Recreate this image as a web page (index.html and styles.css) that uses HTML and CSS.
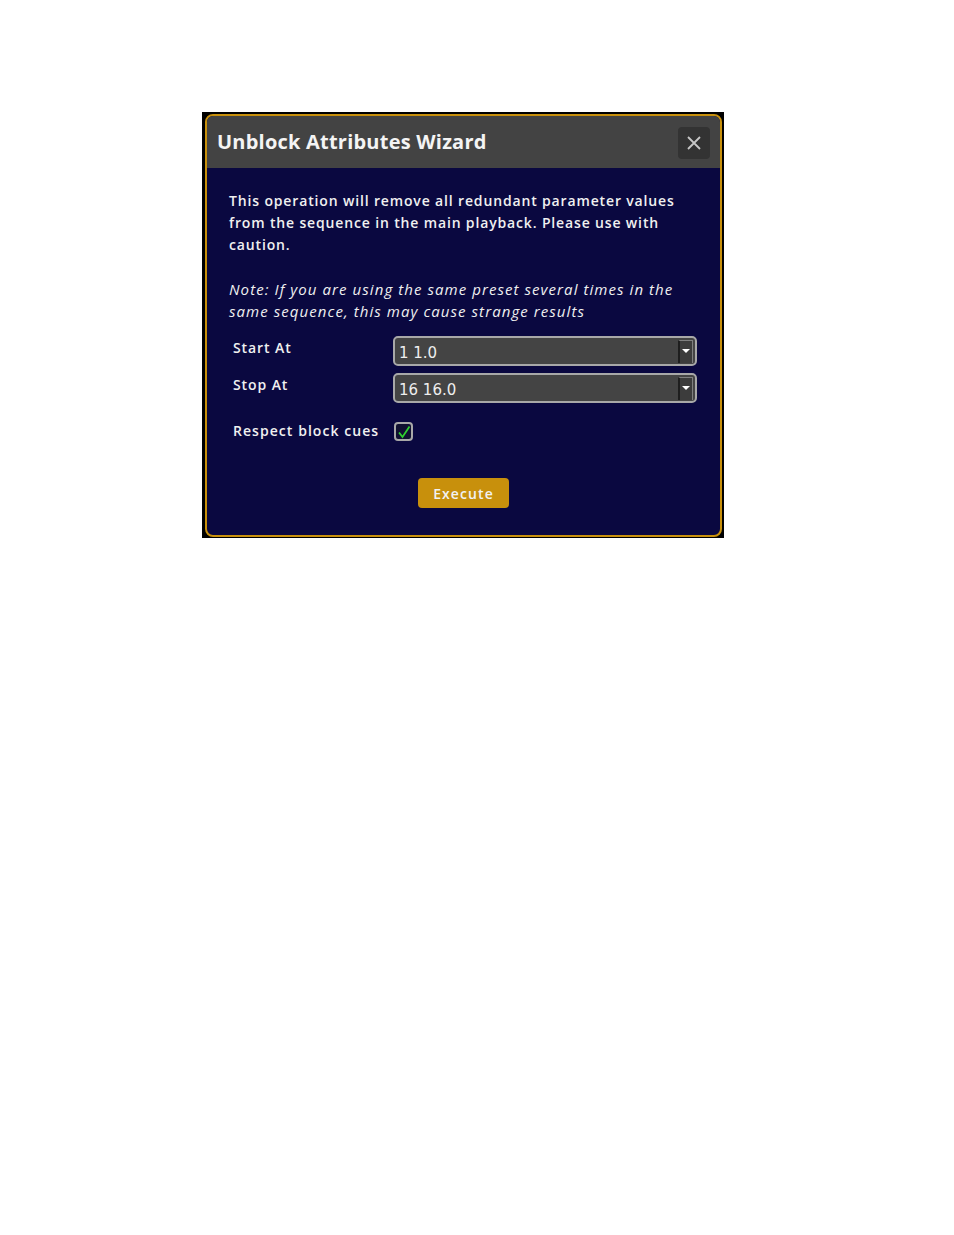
FILE: index.html
```html
<!DOCTYPE html>
<html>
<head>
<meta charset="utf-8">
<link rel="stylesheet" href="styles.css">
</head>
<body>
<div class="frame">
  <div class="dialog">
    <div class="header">
      <div class="title">Unblock Attributes Wizard</div>
      <div class="close">
        <svg width="16" height="16" viewBox="0 0 16 16"><path d="M2 2 L14 14 M14 2 L2 14" stroke="#c8c8c8" stroke-width="1.8" fill="none"/></svg>
      </div>
    </div>
    <div class="content">
      <p class="desc">This operation will remove all redundant parameter values<br>from the sequence in the main playback. Please use with<br>caution.</p>
      <p class="note">Note: If you are using the same preset several times in the<br>same sequence, this may cause strange results</p>
      <div class="row">
        <div class="label">Start At</div>
        <div class="select"><span class="val">1 1.0</span><span class="arrow"></span></div>
      </div>
      <div class="row">
        <div class="label">Stop At</div>
        <div class="select"><span class="val">16 16.0</span><span class="arrow"></span></div>
      </div>
      <div class="row check-row">
        <div class="label">Respect block cues</div>
        <div class="checkbox">
          <svg width="14" height="14" viewBox="0 0 14 14"><path d="M2 7.5 L5.5 12 L12.5 1.5" stroke="#2fcf2f" stroke-width="1.8" fill="none"/></svg>
        </div>
      </div>
      <div class="actions">
        <div class="btn">Execute</div>
      </div>
    </div>
  </div>
</div>
</body>
</html>
```
FILE: styles.css
```css
html, body {
  margin: 0;
  padding: 0;
  background: #ffffff;
}
.frame {
  margin: 112px 0 0 202px;
  width: 522px;
  height: 426px;
  background: #000;
  padding: 2px 2px 1px 3px;
  box-sizing: border-box;
}
.dialog {
  height: 100%;
  box-sizing: border-box;
  border: 2px solid #c8900c;
  border-radius: 8px;
  background: #0a0840;
  overflow: hidden;
  font-family: "Open Sans", "Noto Sans", sans-serif;
  color: #f0f0f0;
}
.header {
  height: 52px;
  background: #434343;
  display: flex;
  align-items: center;
  justify-content: space-between;
  padding: 0 10px 0 10px;
}
.title {
  font-size: 20px;
  font-weight: 700;
  color: #f4f4f4;
  letter-spacing: 0.22px;
  margin-top: -2px;
}
.close {
  width: 32px;
  height: 32px;
  background: #333333;
  border-radius: 4px;
  display: flex;
  align-items: center;
  justify-content: center;
  margin-top: 1px;
}
.content {
  padding: 22px 20px 0 22px;
}
p {
  margin: 0;
  font-size: 14px;
  line-height: 22px;
  white-space: nowrap;
}
.desc {
  font-weight: 600;
  letter-spacing: 0.85px;
}
.note {
  font-style: italic;
  font-size: 15px;
  letter-spacing: 1.07px;
  margin-top: 22px;
}
.row {
  display: flex;
  align-items: center;
  margin-left: 4px;
}
.label {
  width: 160px;
  font-size: 14px;
  font-weight: 600;
  letter-spacing: 0.9px;
  margin-top: -7px;
}
.row + .row { margin-top: 7px; }
.note + .row { margin-top: 14px; }
.select {
  width: 304px;
  height: 30px;
  box-sizing: border-box;
  border: 2px solid #a8a8a8;
  border-radius: 5px;
  background: #444444;
  display: flex;
  align-items: center;
  justify-content: space-between;
  padding: 0 2px 0 4px;
}
.val {
  font-family: "DejaVu Sans", sans-serif;
  font-size: 15px;
  color: #eeeeee;
  margin-top: 3px;
}
.arrow {
  width: 15px;
  height: 23px;
  box-sizing: border-box;
  border-left: 2px solid #1e1e1e;
  border-top: 1px solid #808080;
  border-right: 1px solid #808080;
  background: #3c3c3c;
  position: relative;
  margin-top: 1px;
}
.arrow::after {
  content: "";
  position: absolute;
  left: 2px;
  top: 8px;
  border-left: 4px solid transparent;
  border-right: 4px solid transparent;
  border-top: 4px solid #ffffff;
}
.check-row {
  margin-top: 17px !important;
}
.check-row .label {
  margin-top: -1px;
  letter-spacing: 1.05px;
}
.checkbox {
  width: 19px;
  height: 19px;
  box-sizing: border-box;
  border: 2px solid #a8a8a8;
  border-radius: 4px;
  background: #101030;
  display: flex;
  align-items: center;
  justify-content: center;
  margin-left: 1px;
  margin-top: 2px;
}
.actions {
  display: flex;
  justify-content: center;
  margin-top: 37px;
  padding-right: 2px;
}
.btn {
  width: 91px;
  height: 30px;
  background: #c8900c;
  border-radius: 4px;
  color: #f2f2f2;
  font-size: 14px;
  font-weight: 600;
  letter-spacing: 1.1px;
  display: flex;
  align-items: center;
  justify-content: center;
}
```
